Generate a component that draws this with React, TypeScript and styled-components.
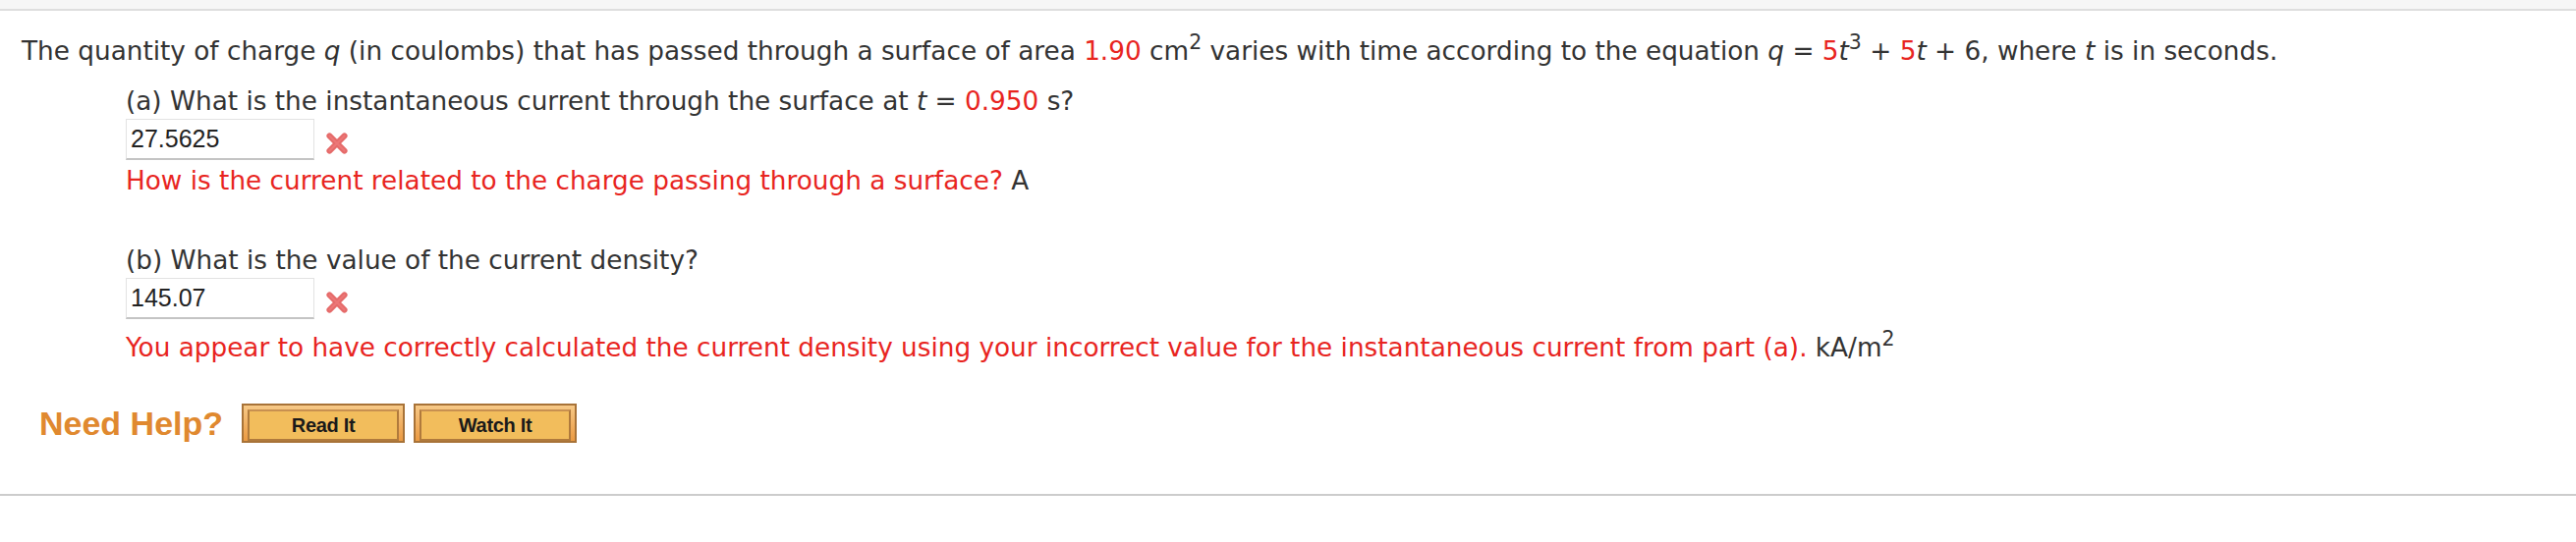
import styled, { createGlobalStyle } from 'styled-components';

const GlobalStyle = createGlobalStyle`
    html, body {
        margin: 0;
        padding: 0;
        background: #ffffff;
    }
    body {
        font-family: "DejaVu Sans", Verdana, sans-serif;
        color: #333333;
    }
`;

const XMark = () => (
    <XIcon viewBox="0 0 24 24" aria-label="incorrect">
        <path d="M5 5 L19 19 M19 5 L5 19" stroke="#e0504f" strokeWidth="5.5" strokeLinecap="round" fill="none" opacity="0.85" />
        <path d="M5 5 L19 19 M19 5 L5 19" stroke="#f08080" strokeWidth="2" strokeLinecap="round" fill="none" opacity="0.6" />
    </XIcon>
);

type PartProps = {
    prompt: React.ReactNode;
    answer: string;
    feedback: string;
    unit: React.ReactNode;
    tall?: boolean;
};

const Part = ({ prompt, answer, feedback, unit, tall }: PartProps) => (
    <PartBox>
        <Prompt>{prompt}</Prompt>
        <AnswerRow>
            <AnswerInput value={answer} readOnly />
            <XMark />
        </AnswerRow>
        <Feedback tall={tall}>
            <Red>{feedback}</Red> {unit}
        </Feedback>
    </PartBox>
);

const App = () => {
    return (
        <>
            <GlobalStyle />
            <TopBar />
            <Question>
                <Stem>
                    The quantity of charge <i>q</i> (in coulombs) that has passed through a surface of area{' '}
                    <Red>1.90</Red> cm<Sup>2</Sup> varies with time according to the equation <i>q</i> ={' '}
                    <Red>5</Red><i>t</i><Sup>3</Sup> + <Red>5</Red><i>t</i> + 6, where <i>t</i> is in seconds.
                </Stem>
                <Part
                    prompt={<>(a) What is the instantaneous current through the surface at <i>t</i> = <Red>0.950</Red> s?</>}
                    answer="27.5625"
                    feedback="How is the current related to the charge passing through a surface?"
                    unit="A"
                />
                <Spacer />
                <Part
                    prompt={<>(b) What is the value of the current density?</>}
                    answer="145.07"
                    feedback="You appear to have correctly calculated the current density using your incorrect value for the instantaneous current from part (a)."
                    unit={<>kA/m<Sup>2</Sup></>}
                    tall
                />
                <HelpRow>
                    <NeedHelp>Need Help?</NeedHelp>
                    <HelpButton><span>Read It</span></HelpButton>
                    <HelpButton><span>Watch It</span></HelpButton>
                </HelpRow>
            </Question>
            <BottomRule />
        </>
    );
};

const TopBar = styled.div`
    height: 9px;
    background: #f6f6f6;
    border-bottom: 2px solid #dedede;
`;

const Question = styled.div`
    padding: 26px 22px 0 22px;
`;

const Stem = styled.div`
    font-size: 26.3px;
    line-height: 30px;
    & i {
        font-style: italic;
    }
`;

const Red = styled.span`
    color: #e8251f;
`;

const Sup = styled.sup`
    font-size: 0.78em;
    line-height: 0;
    vertical-align: 0.55em;
`;

const PartBox = styled.div`
    margin-left: 106px;
    font-size: 26.3px;
`;

const Prompt = styled.div`
    line-height: 30px;
    margin-top: 21px;
`;

const AnswerRow = styled.div`
    display: flex;
    align-items: center;
    gap: 10px;
    margin-top: 3px;
`;

const AnswerInput = styled.input`
    box-sizing: border-box;
    width: 192px;
    height: 42px;
    padding: 0 4px;
    border: 1px solid #e2e2e2;
    border-bottom: 2px solid #c4c4c4;
    font-family: "Liberation Sans", Arial, sans-serif;
    font-size: 25px;
    color: #222222;
    background: #ffffff;
    outline: none;
`;

const XIcon = styled.svg`
    width: 26px;
    height: 26px;
    margin-top: 8px;
`;

const Feedback = styled.div<{ tall?: boolean }>`
    line-height: 30px;
    margin-top: ${({ tall }) => (tall ? '14px' : '6px')};
`;

const Spacer = styled.div`
    height: 30px;
`;

const HelpRow = styled.div`
    display: flex;
    align-items: center;
    margin-top: 42px;
    padding-left: 18px;
    gap: 9px;
`;

const NeedHelp = styled.span`
    font-family: "Liberation Sans", Arial, sans-serif;
    font-weight: bold;
    font-size: 34px;
    color: #e0892f;
    margin-right: 10px;
`;

const HelpButton = styled.button`
    box-sizing: border-box;
    width: 166px;
    height: 40px;
    padding: 4px;
    border: 2px solid #a87338;
    background: linear-gradient(#f7c987, #eb9a42);
    cursor: pointer;
    & span {
        display: flex;
        align-items: center;
        justify-content: center;
        height: 100%;
        border: 2px solid #b07a3c;
        border-top-color: #c89050;
        background: #f2bd5c;
        font-family: "Liberation Sans", Arial, sans-serif;
        font-weight: bold;
        font-size: 20px;
        color: #1a1a1a;
        letter-spacing: -0.3px;
    }
`;

const BottomRule = styled.div`
    margin-top: 52px;
    height: 2px;
    background: #cccccc;
`;

export default App;
